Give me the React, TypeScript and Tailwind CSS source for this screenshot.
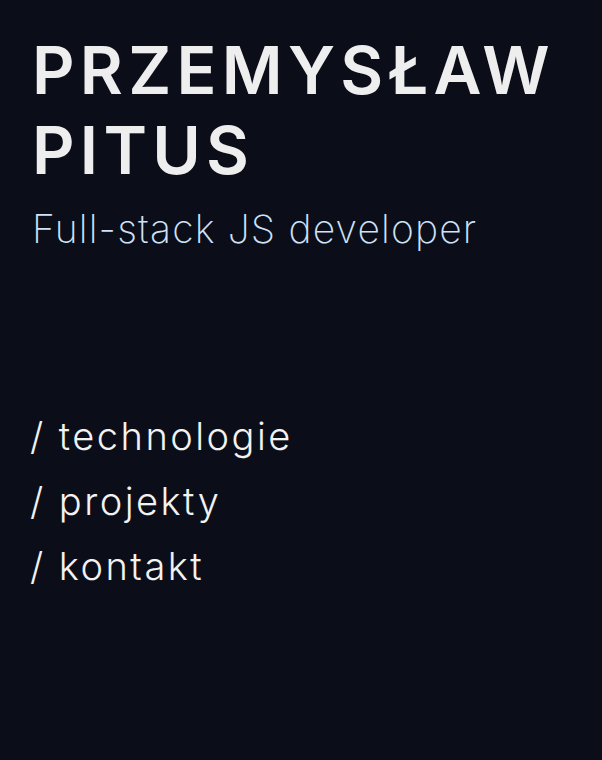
export default function App() {
  return (
    <div className="min-h-[760px] w-full bg-[#0b0e19] px-[32px] pt-[30px]" style={{ fontFamily: 'Inter, "Open Sans", sans-serif' }}>
      <h1 className="text-[66px] leading-[80px] font-semibold tracking-[0.08em] text-[#eeeeee]">
        PRZEMYSŁAW
        <br />
        PITUS
      </h1>
      <p className="mt-[14px] text-[39px] leading-[50px] font-extralight tracking-[0.03em] text-[#cfe2f8]">Full-stack JS developer</p>
      <nav className="mt-[150px] flex flex-col -ml-[2px]">
        <a className="text-[38px] leading-[65px] font-light tracking-[0.065em] text-[#f2f2f2]">/ technologie</a>
        <a className="text-[38px] leading-[65px] font-light tracking-[0.065em] text-[#f2f2f2]">/ projekty</a>
        <a className="text-[38px] leading-[65px] font-light tracking-[0.065em] text-[#f2f2f2]">/ kontakt</a>
      </nav>
    </div>
  );
}
